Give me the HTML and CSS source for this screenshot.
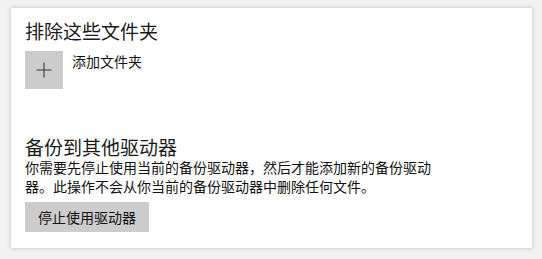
FILE: index.html
```
<!DOCTYPE html>
<html lang="zh">
<head>
    <meta charset="UTF-8">
    <title>备份选项</title>
    <link rel="stylesheet" href="styles.css">
</head>
<body>
<div class="panel">
    <div class="section">
        <div class="title">排除这些文件夹</div>
        <div class="add-row">
            <div class="add-tile">
                <svg width="16" height="16" viewBox="0 0 16 16">
                    <path d="M8 0.5V15.5M0.5 8H15.5" stroke="#3a3a3a" stroke-width="1.1" fill="none"/>
                </svg>
            </div>
            <div class="add-label">添加文件夹</div>
        </div>
    </div>

    <div class="section drives">
        <div class="title">备份到其他驱动器</div>
        <div class="desc">你需要先停止使用当前的备份驱动器，然后才能添加新的备份驱动器。此操作不会从你当前的备份驱动器中删除任何文件。</div>
        <div class="btn">停止使用驱动器</div>
    </div>
</div>
</body>
</html>
```

FILE: styles.css
```
* {
    box-sizing: border-box;
}

body {
    margin: 0;
    padding: 8px 10px 11px 11px;
    background-color: #f2f2f2;
    font-family: "Microsoft YaHei", "Noto Sans CJK SC", sans-serif;
    color: #111;
}

.panel {
    width: 521px;
    height: 240px;
    background-color: #fff;
    box-shadow: 0 0 4px rgba(0, 0, 0, .22);
    padding: 10px 14px 0;
}

.title {
    font-size: 19px;
    line-height: 26px;
    color: #1a1a1a;
}

.add-row {
    display: flex;
    gap: 9px;
    margin-top: 7px;
}

.add-tile {
    width: 38px;
    height: 38px;
    background-color: #cccccc;
    display: flex;
    justify-content: center;
    align-items: center;
}

.add-tile svg {
    display: block;
}

.add-label {
    font-size: 14px;
    line-height: 18px;
    margin-top: 1px;
}

.drives {
    margin-top: 47px;
}

.drives .title {
    line-height: 22px;
}

.desc {
    width: 408px;
    font-size: 14px;
    line-height: 19px;
}

.btn {
    display: inline-block;
    margin-top: 6px;
    height: 30px;
    line-height: 30px;
    padding: 0 13px;
    font-size: 14px;
    background-color: #cccccc;
    color: #111;
}
```
